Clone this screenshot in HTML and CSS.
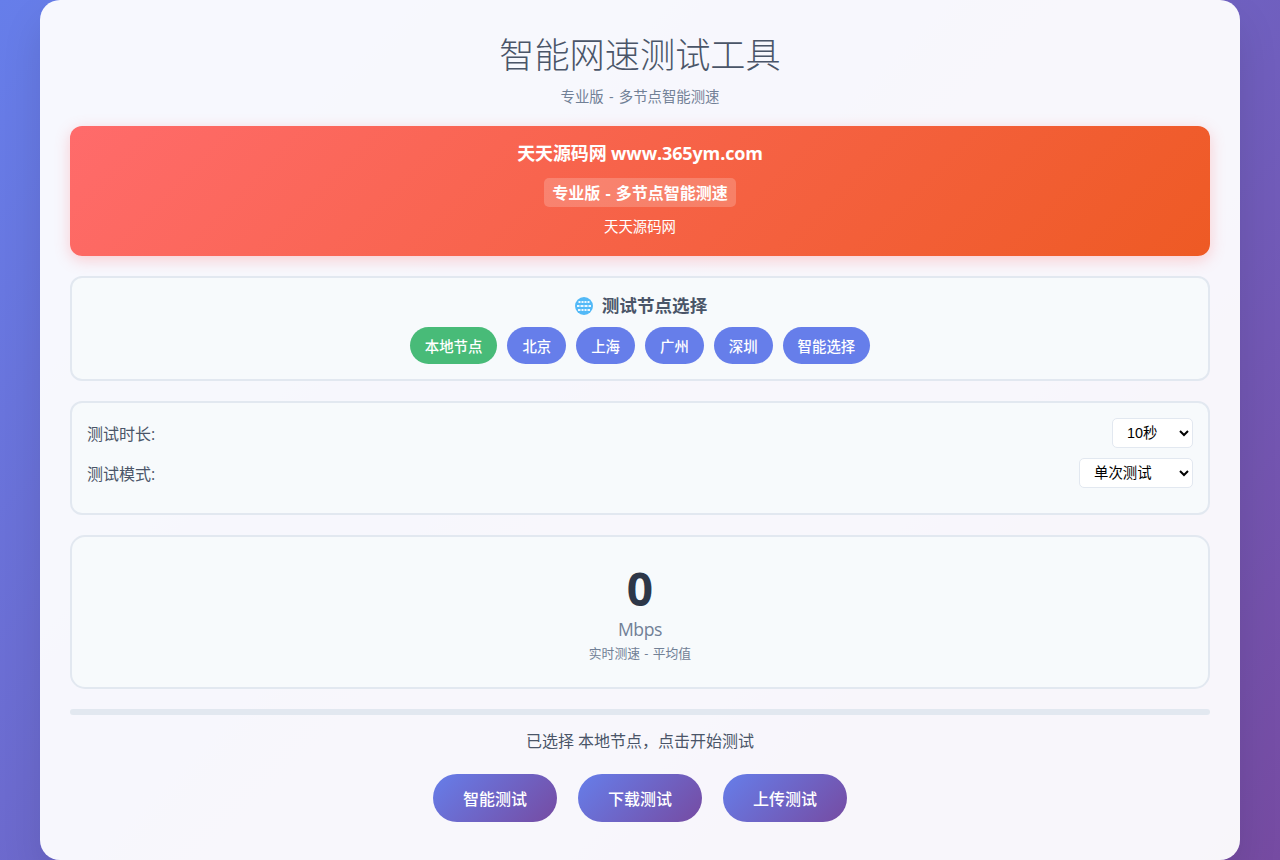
FILE: index.html
```html
<!DOCTYPE html>
<html lang="zh-CN">
<head>
<meta charset="utf-8">
<title>智能网速测试工具</title>
<link rel="stylesheet" href="styles.css">
</head>
<body>
<main class="container">
  <header class="header">
    <h1 class="title">智能网速测试工具</h1>
    <p class="subtitle">专业版 - 多节点智能测速</p>
  </header>
  <section class="banner">
    <div class="banner-title">天天源码网 www.365ym.com</div>
    <div class="banner-tag">专业版 - 多节点智能测速</div>
    <div class="banner-note">天天源码网</div>
  </section>
  <section class="card nodes">
    <h3 class="nodes-title">
      <svg class="globe" viewBox="0 0 18 18" aria-hidden="true">
        <circle cx="9" cy="9" r="9" fill="#52b9f7"/>
        <path fill="#eaf7ff" d="M3.5 4h2v2h-2zM6.5 4h2v2h-2zM9.5 4h2v2h-2zM12.500 4h2v2h-2zM2 8h2.500v2H2zM5.500 8h3v2h-3zM9.500 8h3v2h-3zM13.500 8H16v2h-2.500zM3 12h2.500v2H3zM6.500 12h2v2h-2zM9.500 12h2v2h-2zM12.500 12H15v2h-2.500z"/>
      </svg>
      <span>测试节点选择</span>
    </h3>
    <div class="node-list">
      <button class="node active">本地节点</button>
      <button class="node">北京</button>
      <button class="node">上海</button>
      <button class="node">广州</button>
      <button class="node">深圳</button>
      <button class="node">智能选择</button>
    </div>
  </section>
  <section class="card settings">
    <div class="setting">
      <label class="setting-label">测试时长:</label>
      <select class="select select-short"><option>10秒</option></select>
    </div>
    <div class="setting">
      <label class="setting-label">测试模式:</label>
      <select class="select"><option>单次测试</option></select>
    </div>
  </section>
  <section class="card speed">
    <div class="speed-value">0</div>
    <div class="speed-unit">Mbps</div>
    <div class="speed-note">实时测速 - 平均值</div>
  </section>
  <div class="progress"></div>
  <p class="status">已选择 本地节点，点击开始测试</p>
  <div class="actions">
    <button class="action">智能测试</button>
    <button class="action">下载测试</button>
    <button class="action">上传测试</button>
  </div>
</main>
</body>
</html>
```
FILE: styles.css
```css
* { box-sizing: border-box; }
html, body { margin: 0; height: 860px; overflow: hidden; }
body {
  background: linear-gradient(135deg, #667eea 0%, #764ba2 100%);
  font-family: "Open Sans", "Noto Sans CJK SC", sans-serif;
  display: flex;
  justify-content: center;
}
.container {
  width: 1200px;
  height: 860px;
  padding: 30px;
  background: rgba(255, 255, 255, 0.95);
  border-radius: 20px;
  box-shadow: 0 20px 40px rgba(0, 0, 0, 0.1);
  text-align: center;
  color: #4a5568;
}
.header { margin-bottom: 20px; }
.title {
  margin: 0 0 9px;
  font-size: 35.2px;
  line-height: 48px;
  font-weight: 300;
  color: #4a5568;
}
.subtitle { margin: 0; font-size: 14.4px; line-height: 19px; word-spacing: 1.5px; color: #718096; }
.banner {
  height: 130px;
  margin-bottom: 20px;
  padding-top: 15px;
  border-radius: 12px;
  background: linear-gradient(135deg, #ff6b6b, #ee5a24);
  box-shadow: 0 4px 15px rgba(255, 107, 107, 0.3);
  color: #fff;
}
.banner-title { font-size: 18px; line-height: 25px; font-weight: 700; letter-spacing: -0.12px; margin-bottom: 12px; }
.banner-tag {
  display: inline-block;
  padding: 3px 8px 1px;
  border-radius: 5px;
  background: rgba(255, 255, 255, 0.2);
  font-size: 16px;
  line-height: 25px;
  font-weight: 700;
  word-spacing: 1px;
  vertical-align: top;
}
.banner-note { margin-top: 10px; font-size: 14.4px; line-height: 19px; }
.card {
  margin-bottom: 20px;
  border: 2px solid #e2e8f0;
  border-radius: 12px;
  background: #f7fafc;
}
.nodes { height: 105px; padding-top: 15px; }
.nodes-title {
  display: flex;
  justify-content: center;
  align-items: center;
  gap: 9px;
  margin: 0 0 9px;
  padding-left: 2px;
  font-size: 17.6px;
  line-height: 25px;
  font-weight: 700;
}
.globe { width: 18px; height: 18px; }
.node-list { display: flex; justify-content: center; gap: 10px; }
.node {
  height: 37px;
  padding: 0 15px;
  border: 0;
  border-radius: 20px;
  background: #667eea;
  color: #fff;
  font: 500 14.4px "Open Sans", "Noto Sans CJK SC", sans-serif;
}
.node.active { background: #48bb78; }
.settings { height: 114px; padding: 15px; }
.setting {
  display: flex;
  justify-content: space-between;
  align-items: center;
  height: 30px;
  margin-bottom: 10px;
}
.setting-label { font-size: 16px; }
.select {
  height: 30px;
  padding: 5px 24px 5px 10px;
  border: 1px solid #e2e8f0;
  border-radius: 5px;
  background: #fff;
  color: #000;
  font: 14.4px "Liberation Sans", "Noto Sans CJK SC", sans-serif;
}
.select-short { width: 81px; padding-right: 4px; }
.speed { height: 154px; padding-top: 22px; border-radius: 15px; }
.speed-value { font-size: 46px; line-height: 58px; font-weight: 700; color: #2d3748; }
.speed-unit { font-size: 17.6px; line-height: 24px; letter-spacing: -0.4px; color: #718096; }
.speed-note { margin-top: 1px; font-size: 12.8px; line-height: 22px; word-spacing: 1px; color: #718096; }
.progress { height: 6px; margin-bottom: 15px; border-radius: 3px; background: #e2e8f0; }
.status { margin: 0 0 22px; font-size: 16px; line-height: 22px; color: #4a5568; }
.actions { display: flex; justify-content: center; gap: 21px; }
.action {
  width: 124px;
  height: 48px;
  border: 0;
  border-radius: 25px;
  background: linear-gradient(135deg, #667eea, #764ba2);
  color: #fff;
  font: 500 16px "Open Sans", "Noto Sans CJK SC", sans-serif;
}
```
